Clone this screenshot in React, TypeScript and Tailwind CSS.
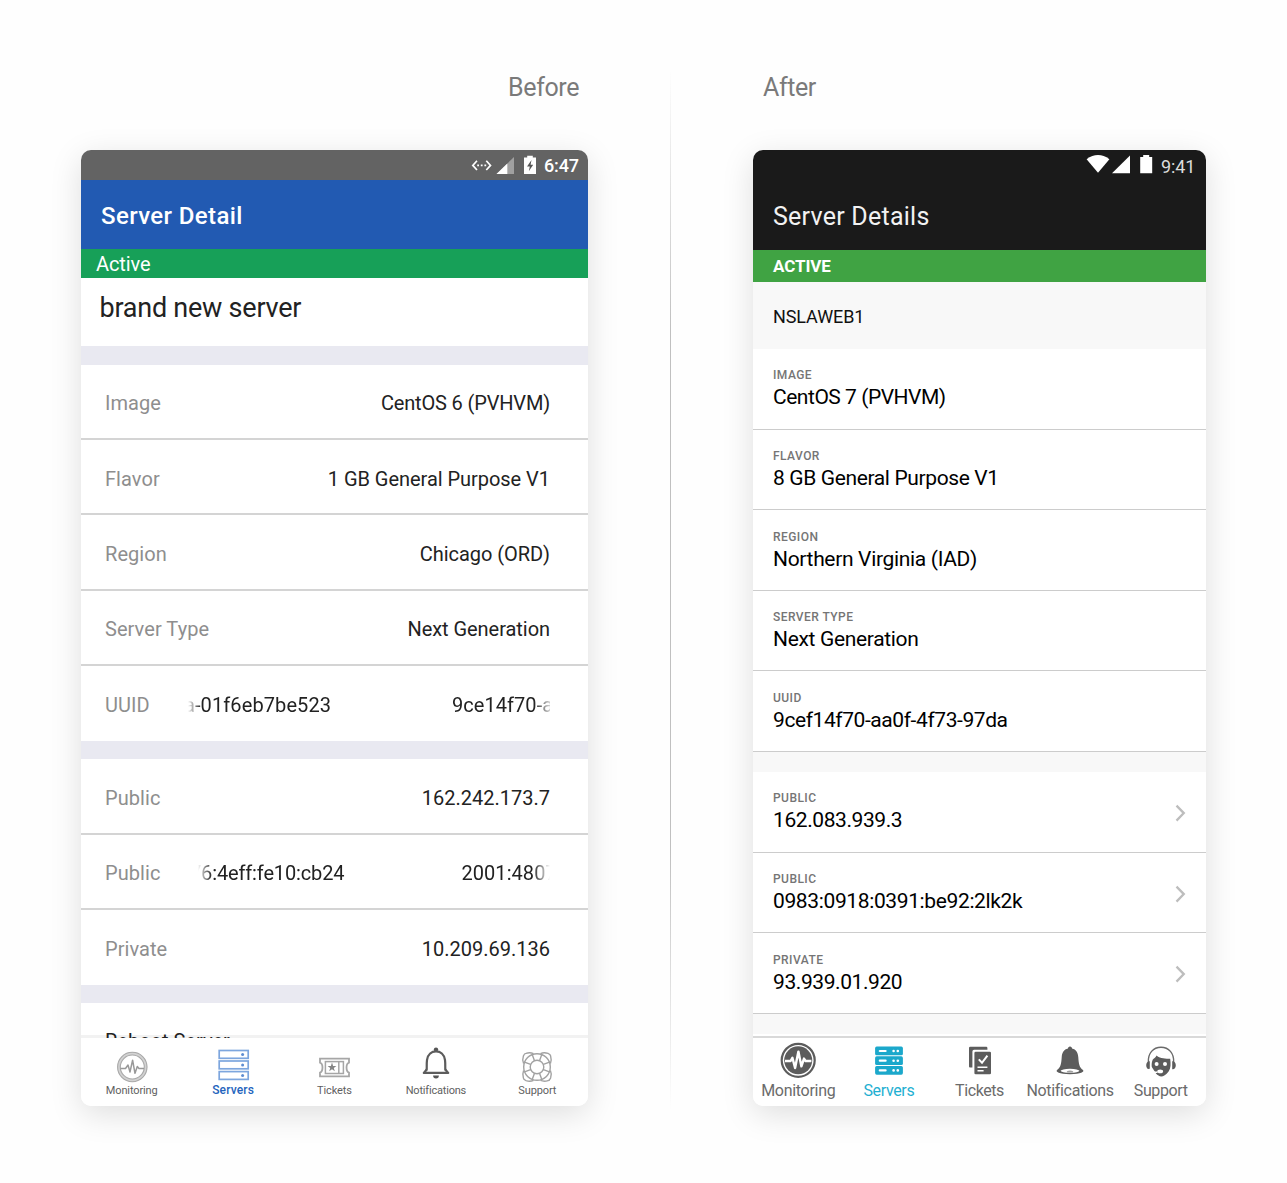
import React from "react";

type Tab = { label: string; icon: React.ReactNode; text: string };

function Icon({ children }: { children: React.ReactNode }) {
  return (
    <svg className="h-10 w-10 shrink-0 overflow-visible" viewBox="-20 -20 40 40" fill="none">
      {children}
    </svg>
  );
}

/* Outlined icons of the old tab bar */

const PulseOutline = (
  <Icon>
    <circle cx="0.3" cy="3" r="13.4" stroke="#d2d2d2" strokeWidth="3" />
    <circle cx="0.3" cy="3" r="14.7" stroke="#a9a9a9" strokeWidth="1.1" />
    <circle cx="0.3" cy="3" r="12" stroke="#a9a9a9" strokeWidth="1.1" />
    <path d="M-11.5 4.5H-6.5L-4 1L-2 8L0.6 -3.8L3 9.3L5.3 2.5L7 4.5H12" stroke="#999" strokeWidth="1.5" strokeLinejoin="round" />
  </Icon>
);

const ServersOutline = (
  <Icon>
    {[-13.5, -3, 7.6].map((y) => (
      <g key={y}>
        <rect x="-13.8" y={y} width="29" height="7.8" stroke="#7da6de" strokeWidth="1.7" />
        <circle cx="9.6" cy={y + 4} r="1.5" fill="#5d8dd2" />
      </g>
    ))}
  </Icon>
);

const TicketOutline = (
  <Icon>
    <path
      d="M-14 -5.4H15V-1.4C11.7 -0.4 11.7 7.6 15 8.6V12.4H-14V8.6C-10.7 7.6 -10.7 -0.4 -14 -1.4Z"
      stroke="#a6a6a6"
      strokeWidth="1.8"
    />
    <rect x="-8.6" y="-2.4" width="18" height="11.9" stroke="#a6a6a6" strokeWidth="1.5" />
    <path d="M4.8 -2.4V9.5" stroke="#a6a6a6" strokeWidth="1.5" />
    <path d="M-2 -1.4L-0.9 2H2.4L-0.2 4L0.8 7.3L-2 5.3L-4.8 7.3L-3.8 4L-6.4 2H-3.1Z" fill="#858585" />
  </Icon>
);

const BellOutline = (
  <Icon>
    <circle cx="0" cy="-14.4" r="2.2" fill="#555" />
    <path d="M-9.4 6.2C-9 4 -9.6 1 -9 -4C-8.2 -9.6 -4.4 -12.6 0 -12.6S8.2 -9.6 9 -4C9.6 1 9 4 9.4 6.2" stroke="#5c5c5c" strokeWidth="2.2" />
    <path d="M-9.3 5.5L-12.2 8.9H12.2L9.3 5.5" stroke="#5c5c5c" strokeWidth="2.2" strokeLinejoin="round" />
    <path d="M-2.9 11.6H2.9A2.9 2.9 0 0 1 -2.9 11.6Z" fill="#555" />
  </Icon>
);

const BuoyOutline = (
  <Icon>
    <g stroke="#a2a2a2" strokeWidth="1.4">
      <circle cx="0" cy="3" r="13.3" />
      <circle cx="0" cy="3" r="6.8" />
      {[0, 90, 180, 270].map((a) => (
        <g key={a} transform={`rotate(${a} 0 3)`}>
          <path d="M-2.6 -3.4L-4.8 -9.5M2.6 -3.4L4.8 -9.5" />
          <path d="M-13.4 -0.5C-14.6 -3 -14.3 -6 -13.6 -8Q-12.6 -10.6 -11 -10.6C-8.5 -11.4 -6 -11.4 -3.5 -10.4" />
        </g>
      ))}
    </g>
  </Icon>
);

/* Solid icons of the new tab bar */

const PulseSolid = (
  <Icon>
    <circle cx="0.2" cy="-3.7" r="16.5" fill="#fff" stroke="#5c5c5c" strokeWidth="2.2" />
    <circle cx="0.2" cy="-3.7" r="14" fill="#5c5c5c" />
    <path
      d="M-13 -3H-7.4L-5.6 -6.2L-2.9 4L0.4 -12.4L3.4 2.4L6 -5.4L7.6 -3H13.4"
      stroke="#fff"
      strokeWidth="2.4"
      strokeLinejoin="round"
    />
  </Icon>
);

const ServersSolid = (
  <Icon>
    {[-17.4, -7.7, 2].map((y) => (
      <g key={y}>
        <rect x="-13.9" y={y} width="27.8" height="8.7" rx="1.6" fill="#1ba8cb" />
        <path d={`M-9.2 ${y + 4.4}H-3.4`} stroke="#fff" strokeWidth="2.2" strokeLinecap="round" />
        <circle cx="4.6" cy={y + 4.4} r="1.3" fill="#fff" />
        <circle cx="8.8" cy={y + 4.4} r="1.3" fill="#fff" />
      </g>
    ))}
  </Icon>
);

const TicketsSolid = (
  <Icon>
    <path d="M-7.6 3.5H-9Q-10 3.5 -10 2.5V-16Q-10 -17.2 -8.8 -17.2H7.2Q8.4 -17.2 8.4 -16V-14.2H-5Q-6.6 -14.2 -6.6 -12.6V3.5Z" fill="#5c5c5c" />
    <rect x="-4.6" y="-12.2" width="16.6" height="22.5" rx="1.3" fill="#5c5c5c" />
    <path d="M-0.2 -4.6L3 -1.2L8.4 -8.4" stroke="#fff" strokeWidth="2" />
    <path d="M-1.5 3.2H8.4M-1.5 6.7H4.6" stroke="#fff" strokeWidth="1.4" />
  </Icon>
);

const BellSolid = (
  <Icon>
    <path
      d="M0 -17.6C1.4 -17.6 2 -16.6 2 -15.5C6.2 -14.6 8 -11.2 8.3 -6.8C8.7 -0.5 9.2 3.2 13 6C14.6 7.8 11 10.2 0 10.2S-14.6 7.8 -13 6C-9.2 3.2 -8.7 -0.5 -8.3 -6.8C-8 -11.2 -6.2 -14.6 -2 -15.5C-2 -16.6 -1.4 -17.6 0 -17.6Z"
      fill="#5c5c5c"
    />
    <ellipse cx="0" cy="6.8" rx="9.4" ry="2" fill="#fff" />
    <path d="M-3.4 8.6A3.4 2.2 0 0 1 3.4 8.6Z" fill="#a0a0a0" />
  </Icon>
);

const AgentSolid = (
  <Icon>
    <path d="M-12.6 -1.5C-13.4 -10.8 -7.6 -16.8 0 -16.8S13.4 -10.8 12.6 -1.5" stroke="#6a6a6a" strokeWidth="1.4" />
    <path d="M-11.2 -2.8V5.2C-13.6 5.6 -14.8 3.6 -14.8 1.2S-13.6 -3 -11.2 -2.8ZM11.2 -2.8V5.2C13.6 5.6 14.8 3.6 14.8 1.2S13.6 -3 11.2 -2.8Z" fill="#5c5c5c" />
    <path d="M-4.4 -8.4C-2.4 -5.8 4 -5 9.2 -5.2C9.8 -0.2 10 4 7.6 7.4C5 11 2.4 12.4 0.2 12.4C-1.6 12.4 -3.6 11.2 -4.8 9.8L-9.2 3C-9.6 0.4 -9.2 -2.6 -8.2 -4.6C-6.6 -5.4 -5.4 -6.8 -4.4 -8.4Z" fill="#5c5c5c" />
    <circle cx="-4.4" cy="0" r="2" fill="#fff" />
    <circle cx="4" cy="0" r="2" fill="#fff" />
    <path d="M-12.4 5C-10.5 8 -7 8.6 -3.4 8" stroke="#fff" strokeWidth="1.6" />
    <ellipse cx="-0.8" cy="7.4" rx="2.9" ry="1.8" fill="#fff" />
  </Icon>
);

const oldTabs: Tab[] = [
  { label: "Monitoring", icon: PulseOutline, text: "tracking-[-0.13px]" },
  { label: "Servers", icon: ServersOutline, text: "-mt-px text-[12px] font-medium text-[#2464bd] tracking-[0.15px]" },
  { label: "Tickets", icon: TicketOutline, text: "tracking-[-0.1px]" },
  { label: "Notifications", icon: BellOutline, text: "tracking-[-0.2px]" },
  { label: "Support", icon: BuoyOutline, text: "tracking-[-0.1px]" },
];

const newTabs: Tab[] = [
  { label: "Monitoring", icon: PulseSolid, text: "tracking-[-0.3px]" },
  { label: "Servers", icon: ServersSolid, text: "text-[#1fb0d2] tracking-[-0.35px]" },
  { label: "Tickets", icon: TicketsSolid, text: "tracking-[-0.4px]" },
  { label: "Notifications", icon: BellSolid, text: "tracking-[-0.32px]" },
  { label: "Support", icon: AgentSolid, text: "tracking-[-0.37px]" },
];

function TabBar({ tabs, className }: { tabs: Tab[]; className: string }) {
  return (
    <nav className={`grid shrink-0 grid-cols-5 bg-white ${className}`}>
      {tabs.map((t) => (
        <div key={t.label} className="flex flex-col items-center whitespace-nowrap">
          {t.icon}
          <span className={`leading-[14px] ${t.text}`}>{t.label}</span>
        </div>
      ))}
    </nav>
  );
}

function OldRow({ label, last, children }: { label: string; last?: boolean; children?: React.ReactNode }) {
  return (
    <div
      className={`flex shrink-0 items-start justify-between pr-[38px] pl-[24px] pt-[26.7px] text-[20px] leading-6 whitespace-nowrap ${
        last ? "h-[74.6px]" : "h-[75.4px] border-b-2 border-[#d4d4d4]"
      }`}
    >
      <span className="text-[#8e8e8e] tracking-[0.06px]">{label}</span>
      {children}
    </div>
  );
}

function Marquee({ left, right, className, leftClass }: { left: string; right: string; className: string; leftClass: string }) {
  return (
    <div className={`flex justify-between overflow-hidden ${className}`}>
      <span className={leftClass}>{left}</span>
      <span className="w-[98px] tracking-[0.05px]">{right}</span>
    </div>
  );
}

function Before() {
  return (
    <section className="flex h-[956px] w-[507px] flex-col overflow-hidden rounded-[10px] bg-white text-[#222] shadow-[0_8px_32px_rgba(0,0,0,0.13)]">
      <div className="flex h-[30px] shrink-0 justify-end bg-[#636363] pr-[10px] text-white">
        <svg className="h-[30px] w-[74px]" viewBox="470 150 74 30" fill="none">
          <path d="M477 160.8L472.8 165.4L477 170M486.3 160.8L490.5 165.4L486.3 170" stroke="#fff" strokeWidth="1.7" />
          <path d="M477.2 165.4h1.8M480.8 165.4h1.8M484.4 165.4h1.8" stroke="#fff" strokeWidth="1.6" />
          <path d="M514 157V174H496.5Z" fill="#a0a0a0" />
          <path d="M507.3 163.6V174H496.5Z" fill="#fff" />
          <path d="M524 157.5H527.2V155.8H532.8V157.5H536V174H524Z" fill="#fff" />
          <path d="M531.5 160L527 166.5H529.8L528.8 171.3L533.2 164.8H530.6Z" fill="#555" />
        </svg>
        <span className="w-[34px] text-[18px] leading-8 font-medium tracking-[-0.15px]">6:47</span>
      </div>
      <div className="h-[69px] shrink-0 bg-[#225ab2] pl-[20px] text-[24px] leading-[72px] font-medium tracking-[0.38px] text-white">
        Server Detail
      </div>
      <div className="h-[29px] shrink-0 bg-[#17a058] pl-[15px] text-[20px] leading-[30px] tracking-[-0.1px] text-white">Active</div>
      <div className="h-[68px] shrink-0 pl-[18.5px] text-[27px] leading-[60px] tracking-[-0.24px]">brand new server</div>
      <div className="h-[18.5px] shrink-0 bg-[#e9e9f1]" />
      <OldRow label="Image"><span className="tracking-[-0.16px]">CentOS 6 (PVHVM)</span></OldRow>
      <OldRow label="Flavor"><span className="tracking-[-0.04px]">1 GB General Purpose V1</span></OldRow>
      <OldRow label="Region"><span className="tracking-[-0.05px]">Chicago (ORD)</span></OldRow>
      <OldRow label="Server Type"><span className="tracking-[-0.05px]">Next Generation</span></OldRow>
      <OldRow label="UUID" last>
        <Marquee
          left="a-01f6eb7be523"
          right="9ce14f70-aa"
          leftClass="-ml-[4px] tracking-[0.1px]"
          className="w-[362px] [mask-image:linear-gradient(to_right,transparent,black_13px,black_346px,transparent_366px)]"
        />
      </OldRow>
      <div className="h-[18.5px] shrink-0 bg-[#e9e9f1]" />
      <OldRow label="Public"><span>162.242.173.7</span></OldRow>
      <OldRow label="Public">
        <Marquee
          left="76:4eff:fe10:cb24"
          right="2001:4807"
          leftClass="-ml-[8px] tracking-[-0.14px]"
          className="w-[352px] [mask-image:linear-gradient(to_right,transparent,black_14px,black_335px,transparent_352px)] [&>span:last-child]:w-[88.5px]"
        />
      </OldRow>
      <OldRow label="Private" last><span>10.209.69.136</span></OldRow>
      <div className="h-[18.5px] shrink-0 bg-[#e9e9f1]" />
      <div className="min-h-0 grow overflow-hidden bg-[linear-gradient(to_top,#f2f2f2_3px,transparent_3px)] pt-[26px] pl-[24px] text-[20px] leading-6">
        Reboot Server
      </div>
      <TabBar tabs={oldTabs} className="h-[68px] pt-[6px] text-[11px] text-[#5f5f5f]" />
    </section>
  );
}

function NewRow({ label, value, chevron, tracking }: { label: string; value: string; chevron?: boolean; tracking: string }) {
  return (
    <div className="flex h-[80.6px] shrink-0 items-start justify-between border-b-[1.5px] border-[#cccccc] pr-[20px] pl-[20px] whitespace-nowrap">
      <div className="flex flex-col pt-[18.4px]">
        <span className="h-[18px] text-[12px] leading-4 font-medium tracking-[0.45px] text-[#757575]">{label}</span>
        <span className={`text-[21px] leading-6 text-black ${tracking}`}>{value}</span>
      </div>
      {chevron && (
        <svg className="mt-[32px] h-[18px] w-[11px]" viewBox="0 0 11 18" fill="none">
          <path d="M1.5 1.6L8.8 9.1L1.5 16.6" stroke="#bdbdbd" strokeWidth="2.3" />
        </svg>
      )}
    </div>
  );
}

function After() {
  return (
    <section className="flex h-[956px] w-[453px] flex-col overflow-hidden rounded-[10px] bg-white shadow-[0_8px_32px_rgba(0,0,0,0.13)]">
      <header className="flex h-[100px] shrink-0 flex-col bg-[#1a1a1a]">
        <div className="flex h-[30px] justify-end pr-[11px]">
          <svg className="h-[30px] w-[76px]" viewBox="1085 150 76 30" fill="#fff">
            <path d="M1086.6 159.2Q1098 151 1109.4 159.2L1098 172.8Z" />
            <path d="M1130 155.5V173.3H1112Z" />
            <path d="M1140.2 157H1143.2V155H1149.2V157H1152.2V173.3H1140.2Z" />
          </svg>
          <span className="w-[34px] text-[18px] leading-[34px] tracking-[-0.1px] text-[#dcdcdc]">9:41</span>
        </div>
        <h1 className="pl-[20px] text-[25px] leading-[73px] tracking-[0.24px] text-[#f2f2f2]">Server Details</h1>
      </header>
      <div className="h-[32px] shrink-0 bg-[#40a343] pl-[20px] text-[17px] leading-[33px] font-bold tracking-[-0.1px] text-white">ACTIVE</div>
      <div className="h-[67px] shrink-0 bg-[#f8f8f8] pl-[20px] text-[18px] leading-[70px] tracking-[-0.1px] text-[#111]">NSLAWEB1</div>
      <NewRow label="IMAGE" value="CentOS 7 (PVHVM)" tracking="tracking-[-0.47px]" />
      <NewRow label="FLAVOR" value="8 GB General Purpose V1" tracking="tracking-[-0.37px]" />
      <NewRow label="REGION" value="Northern Virginia (IAD)" tracking="tracking-[-0.33px]" />
      <NewRow label="SERVER TYPE" value="Next Generation" tracking="tracking-[-0.33px]" />
      <NewRow label="UUID" value="9cef14f70-aa0f-4f73-97da" tracking="tracking-[-0.42px]" />
      <div className="h-[20px] shrink-0 bg-[#f8f8f8]" />
      <NewRow chevron label="PUBLIC" value="162.083.939.3" tracking="tracking-[-0.42px]" />
      <NewRow chevron label="PUBLIC" value="0983:0918:0391:be92:2lk2k" tracking="tracking-[-0.37px]" />
      <NewRow chevron label="PRIVATE" value="93.939.01.920" tracking="tracking-[-0.42px]" />
      <div className="min-h-0 grow border-b-[2px] border-white bg-[#f8f8f8]" />
      <TabBar tabs={newTabs} className="h-[70px] border-t-2 border-[#d9d9d9] pt-[6px] text-[16px] text-[#6b6b6b]" />
    </section>
  );
}

export default function App() {
  return (
    <main className="flex h-[1183px] w-[1287px] bg-[#fefefe] pt-[70px] pl-[81px] font-['Roboto',sans-serif]">
      <div className="w-[507px]">
        <h2 className="h-[80px] pr-[9px] text-right text-[25px] leading-[35px] tracking-[-0.4px] text-[#7a7a7a]">Before</h2>
        <Before />
      </div>
      <div className="mr-[82px] ml-[82px] h-[1040px] w-px bg-[linear-gradient(to_bottom,transparent,#c0c0c0_25%,#c0c0c0_75%,transparent)]" />
      <div className="w-[453px]">
        <h2 className="h-[80px] pl-[10px] text-[25px] leading-[35px] tracking-[-0.4px] text-[#7a7a7a]">After</h2>
        <After />
      </div>
    </main>
  );
}
